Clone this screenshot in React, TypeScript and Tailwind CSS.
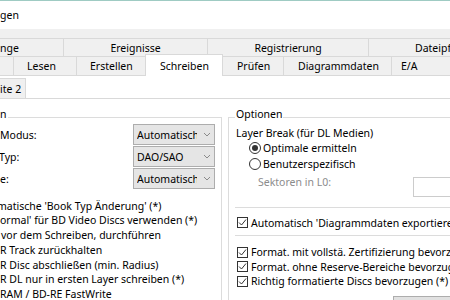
import React from "react";

function Chevron() {
  return (
    <svg width="8" height="5" viewBox="0 0 8 5" className="shrink-0 ml-auto">
      <path d="M1 1 L4 4 L7 1" fill="none" stroke="#8a8a8a" strokeWidth="1" />
    </svg>
  );
}

function Combo({ value }: { value: string }) {
  return (
    <div className="w-[82px] h-[21px] bg-[#e5e5e5] border border-[#adadad] flex items-center pl-[3px] pr-[3px]">
      <span className="w-[60px] overflow-hidden whitespace-nowrap">{value}</span>
      <Chevron />
    </div>
  );
}

function Radio({ checked, label }: { checked?: boolean; label: string }) {
  return (
    <div className="h-[16px] flex items-center ml-[20px] gap-[2px]">
      <span className="w-[12px] h-[12px] rounded-full border border-[#333333] bg-white flex items-center justify-center">
        {checked && <span className="w-[6px] h-[6px] rounded-full bg-[#333333]" />}
      </span>
      <span>{label}</span>
    </div>
  );
}

function Check({ label, h = "h-[14.5px]" }: { label: string; h?: string }) {
  return (
    <div className={`${h} flex items-center ml-[8px] gap-[3px] whitespace-nowrap`}>
      <span className="w-[11px] h-[11px] shrink-0 border border-[#333333] bg-white flex items-center justify-center">
        <svg width="9" height="9" viewBox="0 0 9 9">
          <path d="M1 4.5 L3.5 7 L8 1.5" fill="none" stroke="#333333" strokeWidth="1" />
        </svg>
      </span>
      <span>{label}</span>
    </div>
  );
}

const leftList = [
  { text: "matische 'Book Typ Änderung' (*)", cls: "-ml-[3px]" },
  { text: "ormal' für BD Video Discs verwenden (*)", cls: "ml-0" },
  { text: "vor dem Schreiben, durchführen", cls: "ml-[1px]" },
  { text: "R Track zurückhalten", cls: "ml-0" },
  { text: "R Disc abschließen (min. Radius)", cls: "ml-0" },
  { text: "R DL nur in ersten Layer schreiben (*)", cls: "ml-0" },
  { text: "RAM / BD-RE FastWrite", cls: "ml-0" },
];

export default function App() {
  return (
    <div className="w-[450px] h-[300px] overflow-hidden bg-[#f0f0f0] text-black text-[10.5px] leading-[14px] font-['Noto_Sans',sans-serif] flex flex-col">
      <div className="h-px shrink-0 bg-[#9fcbc3]" />
      <div className="h-[28px] shrink-0 bg-white flex items-center">gen</div>
      <div className="h-[9px] shrink-0" />

      {/* tab row 1 */}
      <div className="h-[18px] shrink-0 flex whitespace-nowrap">
        <div className="w-[64px] shrink-0 border-t border-r border-[#d9d9d9] flex items-center">nge</div>
        <div className="w-[144px] shrink-0 border-t border-r border-[#d9d9d9] flex items-center justify-center">Ereignisse</div>
        <div className="w-[161px] shrink-0 border-t border-r border-[#d9d9d9] flex items-center justify-center">Registrierung</div>
        <div className="w-[146px] shrink-0 border-t border-r border-[#d9d9d9] flex items-center pl-[46px]">Dateipflege</div>
      </div>

      {/* tab row 2 */}
      <div className="h-[19px] shrink-0 flex whitespace-nowrap">
        <div className="w-[14px] shrink-0 border-t border-r border-[#d9d9d9]" />
        <div className="w-[63px] shrink-0 border-t border-r border-[#d9d9d9] flex items-center pl-[13px]">Lesen</div>
        <div className="w-[68px] shrink-0 border-t border-[#d9d9d9] flex items-center pl-[13px]">Erstellen</div>
        <div className="w-[78px] shrink-0 -mt-[2px] h-[22px] relative z-10 bg-white border-t border-l border-r border-[#d9d9d9] flex items-center pl-[14px]">
          Schreiben
        </div>
        <div className="w-[61px] shrink-0 border-t border-r border-[#d9d9d9] flex items-center pl-[14px]">Prüfen</div>
        <div className="w-[108px] shrink-0 border-t border-r border-[#d9d9d9] flex items-center pl-[14px]">Diagrammdaten</div>
        <div className="w-[80px] shrink-0 border-t border-r border-[#d9d9d9] flex items-center pl-[9px]">E/A</div>
      </div>

      {/* content */}
      <div className="flex-1 bg-white border-t border-[#d9d9d9] flex flex-col">
        <div className="h-[22px] shrink-0 flex items-end">
          <div className="w-[26px] h-[20px] bg-[#f0f0f0] border-t border-r border-[#d9d9d9] flex items-center whitespace-nowrap">
            ite 2
          </div>
        </div>
        <div className="flex-1 border-t border-[#d9d9d9] flex items-start pt-[10px] whitespace-nowrap">
          {/* left group */}
          <fieldset className="-ml-[10px] w-[232px] shrink-0 border border-[#dcdcdc]">
            <legend className="ml-[8px] px-[1px] leading-[11px] pb-[5px]">n</legend>
            <div className="-mt-[1px] pl-[9px] pr-[6px] flex flex-col gap-[1px]">
              <div className="flex items-center justify-between">
                <span>Modus:</span>
                <Combo value="Automatisch" />
              </div>
              <div className="flex items-center justify-between">
                <span className="-ml-[1px]">Typ:</span>
                <Combo value="DAO/SAO" />
              </div>
              <div className="flex items-center justify-between">
                <span>e:</span>
                <Combo value="Automatisch" />
              </div>
            </div>
            <div className="mt-[9.5px] pl-[9px] flex flex-col leading-[14.8px]">
              {leftList.map((item) => (
                <div key={item.text} className={item.cls}>
                  {item.text}
                </div>
              ))}
            </div>
          </fieldset>

          {/* right group */}
          <fieldset className="ml-[6px] w-[240px] shrink-0 border border-[#dcdcdc]">
            <legend className="ml-[6px] px-[1px] leading-[11px] pb-[5px]">Optionen</legend>
            <div className="h-[15px] ml-[7px] flex items-center">Layer Break (für DL Medien)</div>
            <Radio checked label="Optimale ermitteln" />
            <Radio label="Benutzerspezifisch" />
            <div className="mt-[5px] h-[20px] flex items-start">
              <span className="ml-[29px] w-[155px] -mt-[2px] text-[#8c8c8c]">Sektoren in L0:</span>
              <div className="w-[50px] h-[20px] border border-[#cccccc] bg-white" />
            </div>
            <div className="mt-[10px] ml-[6px] h-px bg-[#dcdcdc]" />
            <div className="mt-[7px]">
              <Check h="h-[15px]" label="Automatisch 'Diagrammdaten exportieren'" />
            </div>
            <div className="mt-[5px] ml-[6px] h-px bg-[#dcdcdc]" />
            <div className="mt-[9px] flex flex-col">
              <Check label="Format. mit vollstä. Zertifizierung bevorzugen" />
              <Check label="Format. ohne Reserve-Bereiche bevorzugen" />
              <Check label="Richtig formatierte Discs bevorzugen (*)" />
            </div>
            <div className="mt-[7px] ml-[164px] w-[80px] h-[23px] bg-[#e1e1e1] border border-[#adadad]" />
          </fieldset>
        </div>
      </div>
    </div>
  );
}
